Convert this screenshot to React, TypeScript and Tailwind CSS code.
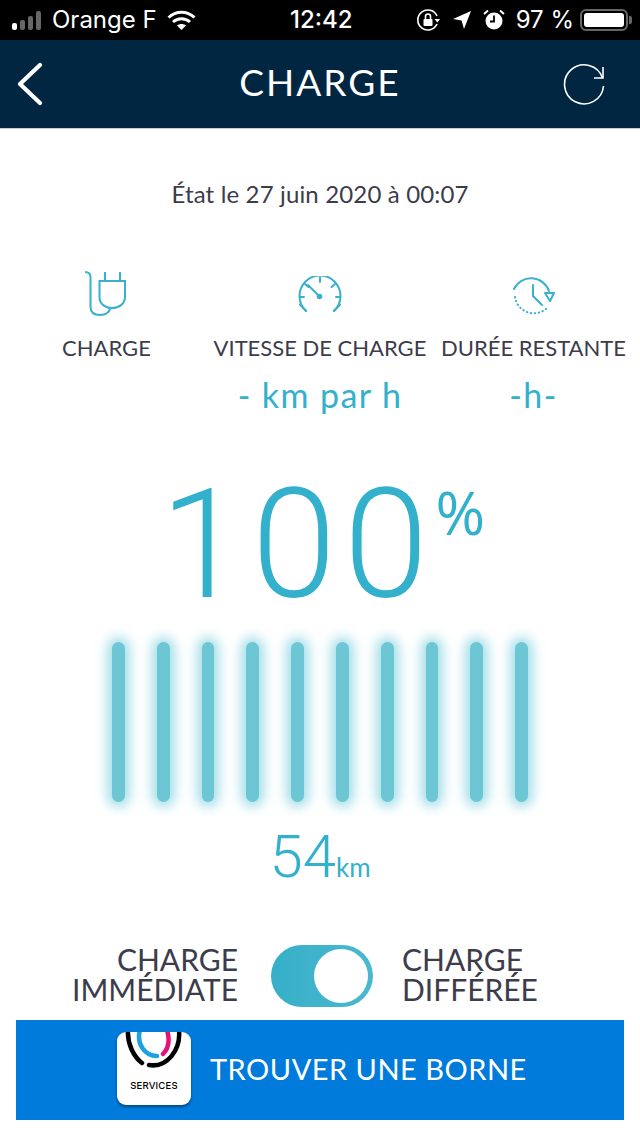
import React from 'react';

const bars = [0, 1, 2, 3, 4, 5, 6, 7, 8, 9];

const StatusBar = () => (
  <div className="relative h-10 bg-black text-white flex items-center justify-between font-['Inter',sans-serif] text-[24px] pl-3 pr-[12px]">
    <div className="flex items-center">
      <div className="flex items-end gap-[3px] h-5 mr-[11px]">
        <span className="w-[5px] h-[7px] rounded-[2px] bg-white" />
        <span className="w-[5px] h-[10px] rounded-[2px] bg-[#666]" />
        <span className="w-[5px] h-[14px] rounded-[2px] bg-[#666]" />
        <span className="w-[5px] h-[19px] rounded-[2px] bg-[#666]" />
      </div>
      <span className="font-normal">Orange F</span>
      <svg className="ml-[10px]" width="29" height="22" viewBox="0 0 29 22" fill="none" stroke="white" strokeWidth="3">
        <path d="M1.5 8.5 C9 1.5 20 1.5 27.5 8.5" />
        <path d="M6 13 C11 8.5 18 8.5 23 13" />
        <path d="M14.5 21 L10 16.5 C12.5 14.5 16.5 14.5 19 16.5 Z" fill="white" stroke="none" />
      </svg>
    </div>
    <span className="font-medium absolute left-[290px]">12:42</span>
    <div className="flex items-center">
      <svg width="24" height="24" viewBox="0 0 24 24" fill="none" stroke="white" strokeWidth="1.6">
        <path d="M21 16 A10 10 0 1 1 21 8" />
        <path d="M18.5 11 L21.5 14.5 L24 11 Z" fill="white" stroke="none" />
        <rect x="7.5" y="11" width="9" height="7" rx="1" fill="white" stroke="none" />
        <path d="M9.5 11 V8.5 A2.5 2.5 0 0 1 14.5 8.5 V11" />
      </svg>
      <svg className="ml-[12px]" width="20" height="20" viewBox="0 0 20 20" fill="white">
        <path d="M19 1 L12 19 L9.5 10.5 L1 9 Z" />
      </svg>
      <svg className="ml-[11px]" width="22" height="22" viewBox="0 0 22 22">
        <circle cx="11" cy="12" r="8.5" fill="white" />
        <path d="M11 6.5 V12.5 H7" stroke="black" strokeWidth="1.8" fill="none" />
        <path d="M1 5 L5 1.5 M21 5 L17 1.5" stroke="white" strokeWidth="2" />
      </svg>
      <span className="ml-[11px]">97 %</span>
      <div className="relative ml-[6px] w-[48px] h-[22px] border-2 border-[#666] rounded-[6px] p-[2px]">
        <div className="w-full h-full bg-white rounded-[3px]" />
        <span className="absolute left-[100%] top-[5px] ml-[3px] w-[3px] h-[8px] bg-[#666] rounded-r-[2px]" />
      </div>
    </div>
  </div>
);

const Header = () => (
  <div className="relative h-[89px] bg-[#002642] border-b border-[#c8ccd0] flex items-center justify-between pl-[16px] pr-[34px] text-white">
    <svg width="28" height="44" viewBox="0 0 28 44" fill="none" stroke="white" strokeWidth="4.2" strokeLinecap="round" strokeLinejoin="round">
      <path d="M24 3 L4 22 L24 41" />
    </svg>
    <h1 className="absolute inset-x-0 text-center text-[37px] tracking-[2px] pb-[5px]">CHARGE</h1>
    <svg width="44" height="44" viewBox="0 0 44 44" fill="none" stroke="white" strokeWidth="1.6">
      <path d="M41.5 24 A19.5 19.5 0 1 1 40.5 16" />
      <path d="M41 5 V16 H32" />
    </svg>
  </div>
);

const PlugIcon = () => (
  <svg width="44" height="48" viewBox="0 0 44 48" fill="none" stroke="#39b1cc" strokeWidth="2">
    <path d="M1 1 C5 1 6.5 3 6.5 6 V36 C6.5 42 10 44 16 44 C22 44 26 41 26 37" />
    <path d="M15.5 10 H41 V26 C41 33 35 37 28 37 C21 37 15.5 33 15.5 26 Z" />
    <path d="M21 1 V10 M36 1 V10" />
  </svg>
);

const GaugeIcon = () => (
  <svg width="44" height="38" viewBox="0 0 44 38" fill="none" stroke="#39b1cc" strokeWidth="2" strokeLinecap="round">
    <path d="M8 35 A20.5 20.5 0 1 1 36 35" />
    <path d="M2 28.5 L8 35 M42 28.5 L36 35" />
    <path d="M22 1 V6 M7 8 L10.5 11 M37 8 L33.5 11 M2 21 H6 M42 21 H38" />
    <path d="M22 21 L10 9" />
    <circle cx="21.5" cy="20.5" r="2.8" fill="#39b1cc" stroke="none" />
  </svg>
);

const ClockIcon = () => (
  <svg width="44" height="40" viewBox="0 0 44 40" fill="none" stroke="#39b1cc" strokeWidth="2" strokeLinecap="round">
    <path d="M2 14 A19 19 0 0 1 37 16" />
    <path d="M3 22 A19 19 0 0 0 35 33" strokeDasharray="0.5 3.5" strokeWidth="2" />
    <path d="M33 18 H42 L38 26 Z" strokeLinejoin="round" />
    <path d="M21 10 V21 L30 30" />
  </svg>
);

const Stat = ({ icon, label, value }: { icon: React.ReactNode; label: string; value?: string }) => (
  <div className="flex flex-col items-center whitespace-nowrap">
    <div className="h-[52px] flex items-center justify-center">{icon}</div>
    <div className="text-[22px] text-[#3c3c4a] leading-[26px] mt-[14px]">{label}</div>
    <div className="h-[52px] mt-[8px] text-[34px] leading-[52px] text-[#33b0cc] tracking-[1.4px]">{value}</div>
  </div>
);

export default function App() {
  return (
    <div className="w-[640px] h-[1136px] bg-white font-['Lato',sans-serif] overflow-hidden">
      <StatusBar />
      <Header />
      <div className="text-center text-[24px] tracking-[0.15px] text-[#3c3c4a] mt-[51px] leading-[28px]">État le 27 juin 2020 à 00:07</div>

      <div className="grid grid-cols-[213px_214px_213px] justify-items-center mt-[61px]">
        <Stat icon={<PlugIcon />} label="CHARGE" />
        <Stat icon={<GaugeIcon />} label="VITESSE DE CHARGE" value="- km par h" />
        <Stat icon={<ClockIcon />} label="DURÉE RESTANTE" value="-h-" />
      </div>

      <div className="relative w-fit ml-[160px] mt-[34px] font-['Roboto',sans-serif] font-light tracking-[7.5px] text-[#33b0cc] text-[152px] leading-[180px]">
        100
        <span className="absolute left-[100%] top-[22px] font-['Open_Sans',sans-serif] text-[60px] leading-[70px] font-normal tracking-normal">%</span>
      </div>

      <div className="flex justify-center gap-[32px] mt-[7px]">
        {bars.map((b) => (
          <div key={b} className="w-[12.8px] h-[160px] rounded-full bg-[#6cc6d4] shadow-[0_0_12px_5px_rgba(90,195,215,0.55)]" />
        ))}
      </div>

      <div className="text-center text-[#33b0cc] text-[60px] leading-[64px] font-['Roboto',sans-serif] font-light mt-[23px]">
        54<span className="text-[26px] font-['Lato',sans-serif] font-normal">km</span>
      </div>

      <div className="flex items-center mt-[45px] text-[30px] leading-[30px] text-[#3c3c4a]">
        <div className="w-[238px] text-right pb-[4px]">CHARGE<br />IMMÉDIATE</div>
        <div className="w-[102px] h-[62px] ml-[33px] mr-[29px] rounded-full bg-gradient-to-r from-[#36afc8] to-[#4ab9cf] flex items-center justify-end pr-[5px] shrink-0">
          <div className="w-[54px] h-[54px] rounded-full bg-white" />
        </div>
        <div className="w-[238px] text-left pb-[4px]">CHARGE<br />DIFFÉRÉE</div>
      </div>

      <div className="mx-4 mt-[12px] h-[100px] bg-[#007bdb] relative flex items-center justify-center pb-[2px]">
        <div className="absolute left-[101px] top-[12px] w-[74px] h-[73px] rounded-[9px] bg-white shadow-[0_2px_3px_rgba(0,0,0,0.4)] overflow-hidden flex flex-col items-center justify-end pb-[12px]">
          <svg className="absolute left-0 top-0" width="74" height="50" viewBox="0 0 74 50" fill="none" strokeLinecap="round">
            <path d="M11 -2 C10 12 17 25 25 31" stroke="black" strokeWidth="4.5" />
            <path d="M32 33 C50 36 64 18 62 -2" stroke="black" strokeWidth="4.5" />
            <path d="M23 -2 C19 12 28 24 40 24" stroke="#1aa3e0" strokeWidth="4.5" />
            <path d="M46 22 C52 16 53 8 50 -2" stroke="#e5127d" strokeWidth="4.5" />
          </svg>
          <span className="text-[9.5px] font-['Inter',sans-serif] font-medium text-black tracking-[0.2px]">SERVICES</span>
        </div>
        <span className="absolute left-[194px] text-white text-[29px] tracking-[0.5px]">TROUVER UNE BORNE</span>
      </div>
    </div>
  );
}
